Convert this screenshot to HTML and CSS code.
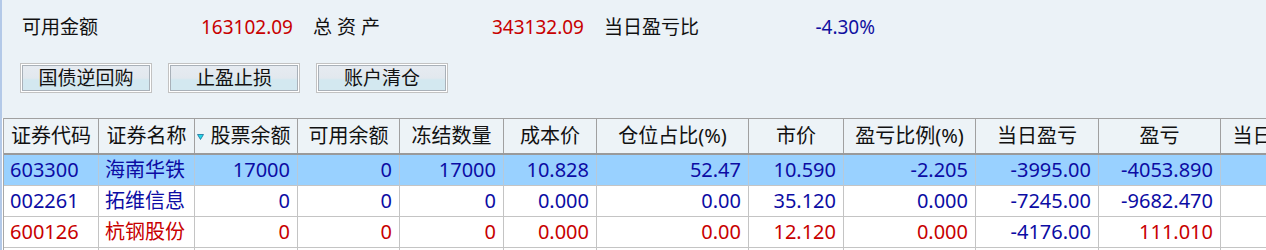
FILE: index.html
```html
<!DOCTYPE html>
<html lang="zh-CN">
<head>
<meta charset="utf-8">
<title>持仓</title>
<link rel="stylesheet" href="styles.css">
</head>
<body>
<div class="window">
  <div class="panel">
    <div class="summary">
      <div class="stat"><span class="label">可用金额</span><span class="value up">163102.09</span></div>
      <div class="stat"><span class="label spaced">总资产</span><span class="value up">343132.09</span></div>
      <div class="stat"><span class="label">当日盈亏比</span><span class="value down">-4.30%</span></div>
    </div>
    <div class="actions">
      <button class="btn"><span class="btn-face">国债逆回购</span></button>
      <button class="btn"><span class="btn-face">止盈止损</span></button>
      <button class="btn"><span class="btn-face">账户清仓</span></button>
    </div>
  </div>
  <div class="grid" role="table">
    <div class="row head" role="row">
      <div class="cell">证券代码</div>
      <div class="cell">证券名称</div>
      <div class="cell sorted"><svg class="sort" width="7" height="6" viewBox="0 0 7 6"><polygon points="0.5,0.5 6.5,0.5 3.5,5.5" fill="#22d8e8" stroke="#1b6f9a" stroke-width="0.8"/></svg><span class="head-text">股票余额</span></div>
      <div class="cell">可用余额</div>
      <div class="cell">冻结数量</div>
      <div class="cell">成本价</div>
      <div class="cell">仓位占比(%)</div>
      <div class="cell">市价</div>
      <div class="cell">盈亏比例(%)</div>
      <div class="cell">当日盈亏</div>
      <div class="cell">盈亏</div>
      <div class="cell">当日参考盈亏</div>
    </div>
    <div class="row selected down" role="row">
      <div class="cell l">603300</div>
      <div class="cell l">海南华铁</div>
      <div class="cell r">17000</div>
      <div class="cell r">0</div>
      <div class="cell r">17000</div>
      <div class="cell r">10.828</div>
      <div class="cell r">52.47</div>
      <div class="cell r">10.590</div>
      <div class="cell r">-2.205</div>
      <div class="cell r">-3995.00</div>
      <div class="cell r">-4053.890</div>
      <div class="cell r"></div>
    </div>
    <div class="row down" role="row">
      <div class="cell l">002261</div>
      <div class="cell l">拓维信息</div>
      <div class="cell r">0</div>
      <div class="cell r">0</div>
      <div class="cell r">0</div>
      <div class="cell r">0.000</div>
      <div class="cell r">0.00</div>
      <div class="cell r">35.120</div>
      <div class="cell r">0.000</div>
      <div class="cell r">-7245.00</div>
      <div class="cell r">-9682.470</div>
      <div class="cell r"></div>
    </div>
    <div class="row up" role="row">
      <div class="cell l">600126</div>
      <div class="cell l">杭钢股份</div>
      <div class="cell r">0</div>
      <div class="cell r">0</div>
      <div class="cell r">0</div>
      <div class="cell r">0.000</div>
      <div class="cell r">0.00</div>
      <div class="cell r">12.120</div>
      <div class="cell r">0.000</div>
      <div class="cell r blue">-4176.00</div>
      <div class="cell r">111.010</div>
      <div class="cell r"></div>
    </div>
    <div class="row" role="row">
      <div class="cell"></div><div class="cell"></div><div class="cell"></div><div class="cell"></div>
      <div class="cell"></div><div class="cell"></div><div class="cell"></div><div class="cell"></div>
      <div class="cell"></div><div class="cell"></div><div class="cell"></div><div class="cell"></div>
    </div>
  </div>
</div>
</body>
</html>
```
FILE: styles.css
```css
html, body {
  margin: 0;
  padding: 0;
  background: #ffffff;
  overflow: hidden;
}
body {
  width: 1266px;
  height: 250px;
  font-family: "Noto Sans", "Noto Sans CJK SC", sans-serif;
  color: #111111;
}
.window {
  border-left: 2px solid #b3c9e8;
  height: 250px;
  box-sizing: border-box;
  overflow: hidden;
}
.panel {
  background: #ebf2f7;
  height: 118px;
  box-sizing: border-box;
  padding-left: 20px;
}
.summary {
  display: flex;
  gap: 20px;
  height: 54px;
  align-items: center;
  font-size: 19px;
}
.stat {
  width: 271px;
  display: flex;
  justify-content: space-between;
  align-items: center;
  line-height: 24px;
}
.label { color: #111111; }
.spaced { letter-spacing: 5px; }
.value.up { color: #c80000; }
.value.down { color: #1010a0; }
.actions {
  display: flex;
  gap: 16px;
  margin-top: 9px;
  margin-left: -2px;
}
.btn {
  width: 132px;
  height: 30px;
  padding: 1px;
  margin: 0;
  border: 1px solid #c2c2c2;
  background: #ffffff;
  box-sizing: border-box;
  display: flex;
  font: inherit;
  cursor: pointer;
}
.btn-face {
  flex: 1;
  display: flex;
  align-items: center;
  justify-content: center;
  border: 1px solid #a9b1b9;
  background: linear-gradient(#e6ebf1 0%, #e2e8ee 50%, #d3e8f0 58%, #d3e8f0 100%);
  font-size: 19px;
  color: #111111;
  line-height: 1;
}
.grid {
  margin-left: 1px;
  width: max-content;
  border-left: 1px solid #a8a8a8;
}
.row {
  display: grid;
  grid-template-columns: 95px 96px 103px 102px 104px 93px 152px 95px 132px 123px 122px 144px;
  height: 31px;
  font-size: 20px;
}
.row.head {
  height: 37px;
  background: #edf3f7;
  border-top: 1px solid #a0a0a0;
  border-bottom: 2px solid #9a9a9a;
  box-sizing: border-box;
}
.cell {
  box-sizing: border-box;
  border-right: 1px solid #c4c4c4;
  border-bottom: 1px solid #c4c4c4;
  display: flex;
  align-items: center;
  white-space: nowrap;
  overflow: hidden;
  line-height: 1;
}
.head .cell {
  border-right-color: #a0a0a0;
  border-bottom: none;
  justify-content: center;
  color: #111111;
}
.head .cell.sorted {
  justify-content: flex-start;
  padding-left: 2px;
}
.sort { flex: none; margin-top: 2px; }
.head-text { flex: 1; text-align: center; }
.cell.l { padding-left: 6px; }
.cell.r { justify-content: flex-end; padding-right: 7px; }
.row.selected { background: #99d1ff; }
.row.selected .cell { border-right-color: #b7c9d9; }
.row.down { color: #0c0ca4; }
.row.up { color: #c80000; }
.row .cell.blue { color: #0c0ca4; }
```
